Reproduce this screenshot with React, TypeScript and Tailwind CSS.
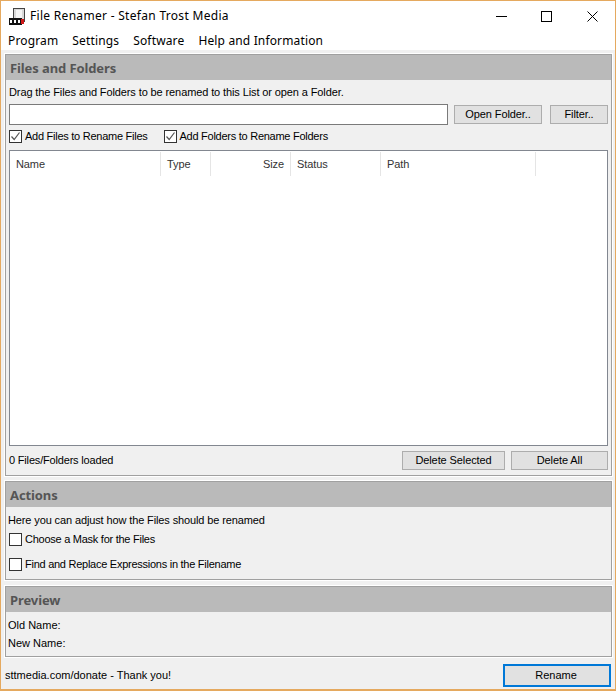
import { clsx } from 'clsx';

const COLUMNS = [
  { label: 'Name', width: 'w-[151px]', align: 'text-left' },
  { label: 'Type', width: 'w-[50px]', align: 'text-left' },
  { label: 'Size', width: 'w-[80px]', align: 'text-right' },
  { label: 'Status', width: 'w-[90px]', align: 'text-left' },
  { label: 'Path', width: 'w-[155px]', align: 'text-left' },
];

function AppIcon() {
  return (
    <svg width="17" height="17" viewBox="0 0 17 17" className="shrink-0">
      <rect x="4.5" y="0.5" width="11" height="13" fill="#d8d8d8" stroke="#444" />
      <rect x="7" y="2" width="6" height="9" fill="#f4f4f4" />
      <rect x="0" y="10" width="13" height="7" fill="#111" />
      <rect x="1" y="12" width="2" height="3" fill="#fff" />
      <rect x="5" y="12" width="2" height="3" fill="#fff" />
      <rect x="9" y="12" width="2" height="3" fill="#fff" />
      <rect x="12" y="11" width="3" height="5" fill="#d01818" />
    </svg>
  );
}

function WindowButtons() {
  return (
    <div className="ml-auto flex items-center gap-[34px] mr-[17px]">
      <svg width="11" height="11" viewBox="0 0 11 11" shapeRendering="crispEdges">
        <path d="M0 5.5H11" stroke="#000" />
      </svg>
      <svg width="11" height="11" viewBox="0 0 11 11" shapeRendering="crispEdges">
        <rect x="0.5" y="0.5" width="10" height="10" fill="none" stroke="#000" />
      </svg>
      <svg width="11" height="11" viewBox="0 0 11 11" className="ml-px">
        <path d="M0.5 0.5L10.5 10.5M10.5 0.5L0.5 10.5" stroke="#000" />
      </svg>
    </div>
  );
}

function Button({ label, className }: { label: string; className: string }) {
  return (
    <button
      type="button"
      className={clsx(
        'flex items-center justify-center bg-[#e1e1e1] border border-[#adadad] text-[11px] tracking-[-0.1px] text-black',
        className,
      )}
    >
      {label}
    </button>
  );
}

function CheckRow({ label, checked }: { label: string; checked?: boolean }) {
  return (
    <label className="flex items-center gap-[3px] text-[11px] leading-[14px] tracking-[-0.26px]">
      <span className="flex w-[13px] h-[13px] items-center justify-center border border-[#333] bg-white">
        {checked && (
          <svg width="11" height="11" viewBox="0 0 11 11">
            <path d="M1.5 5.5L4.2 8.5L9.5 1.5" fill="none" stroke="#555" strokeWidth="1.2" />
          </svg>
        )}
      </span>
      {label}
    </label>
  );
}

function Panel({ title, className, children }: { title: string; className: string; children: React.ReactNode }) {
  return (
    <section className={clsx('flex flex-col ml-[4px] w-[607px] border border-[#a0a0a0] shadow-[0_0_0_1px_#fff]', className)}>
      <h2 className="flex items-center h-[25px] shrink-0 bg-[#bababa] pl-[4px] pt-[2px] font-['Noto_Sans',sans-serif] text-[13px] font-bold tracking-[-0.1px] text-[#555]">
        {title}
      </h2>
      {children}
    </section>
  );
}

export default function App() {
  return (
    <div className="flex flex-col w-[616px] h-[691px] overflow-hidden bg-[#f0f0f0] border border-[#e5a95f] border-b-2 font-['Liberation_Sans',sans-serif] text-black">
      <header className="flex h-[30px] shrink-0 items-center bg-white pl-[8px]">
        <AppIcon />
        <span className="ml-[4px] font-['Noto_Sans',sans-serif] text-[12px] tracking-[0.3px]">
          File Renamer - Stefan Trost Media
        </span>
        <WindowButtons />
      </header>

      <nav className="flex h-[19px] shrink-0 items-center gap-[14px] bg-white pl-[7px] font-['Noto_Sans',sans-serif] text-[12px] tracking-[0.15px]">
        <span>Program</span>
        <span>Settings</span>
        <span>Software</span>
        <span>Help and Information</span>
      </nav>

      <Panel title="Files and Folders" className="mt-[4px] h-[422px]">
        <p className="mt-[4px] ml-[3px] text-[11px] leading-[17px] tracking-[-0.11px]">
          Drag the Files and Folders to be renamed to this List or open a Folder.
        </p>
        <div className="flex items-center mt-[3px] ml-[3px]">
          <div className="w-[439px] h-[21px] border border-[#7a7a7a] bg-white" />
          <Button label="Open Folder.." className="ml-[6px] w-[88px] h-[19px]" />
          <Button label="Filter.." className="ml-[8px] w-[58px] h-[19px]" />
        </div>
        <div className="flex items-center mt-[4px] ml-[3px] gap-[16px]">
          <CheckRow label="Add Files to Rename Files" checked />
          <CheckRow label="Add Folders to Rename Folders" checked />
        </div>
        <div className="mt-[7px] ml-[3px] w-[599px] h-[296px] border border-[#828790] bg-white">
          <div className="flex mt-px h-[24px]">
            {COLUMNS.map((col) => (
              <div
                key={col.label}
                className={clsx('h-full border-r border-[#e5e5e5] px-[6px] text-[11px] leading-[24px] tracking-[-0.1px] text-[#333]', col.width, col.align)}
              >
                {col.label}
              </div>
            ))}
          </div>
        </div>
        <div className="flex items-center mt-[5px] ml-[3px]">
          <span className="text-[11px] tracking-[-0.18px]">0 Files/Folders loaded</span>
          <Button label="Delete Selected" className="ml-auto w-[103px] h-[19px]" />
          <Button label="Delete All" className="ml-[6px] mr-[3px] w-[97px] h-[19px]" />
        </div>
      </Panel>

      <Panel title="Actions" className="mt-[5px] h-[99px]">
        <p className="mt-[5px] ml-[2px] text-[11px] leading-[16px] tracking-[-0.12px]">Here you can adjust how the Files should be renamed</p>
        <div className="mt-[4px] ml-[3px]">
          <CheckRow label="Choose a Mask for the Files" />
        </div>
        <div className="mt-[11px] ml-[3px]">
          <CheckRow label="Find and Replace Expressions in the Filename" />
        </div>
      </Panel>

      <Panel title="Preview" className="mt-[6px] h-[71px]">
        <p className="mt-[4px] ml-[2px] text-[11px] leading-[18px]">Old Name:</p>
        <p className="ml-[2px] text-[11px] leading-[18px]">New Name:</p>
      </Panel>

      <footer className="flex items-center mt-[7px] ml-[4px]">
        <span className="text-[11px]">sttmedia.com/donate - Thank you!</span>
        <button
          type="button"
          className="ml-auto mr-[4px] pr-[2px] w-[108px] h-[23px] bg-[#e1e1e1] border-2 border-[#0078d7] text-[11px]"
        >
          Rename
        </button>
      </footer>
    </div>
  );
}
